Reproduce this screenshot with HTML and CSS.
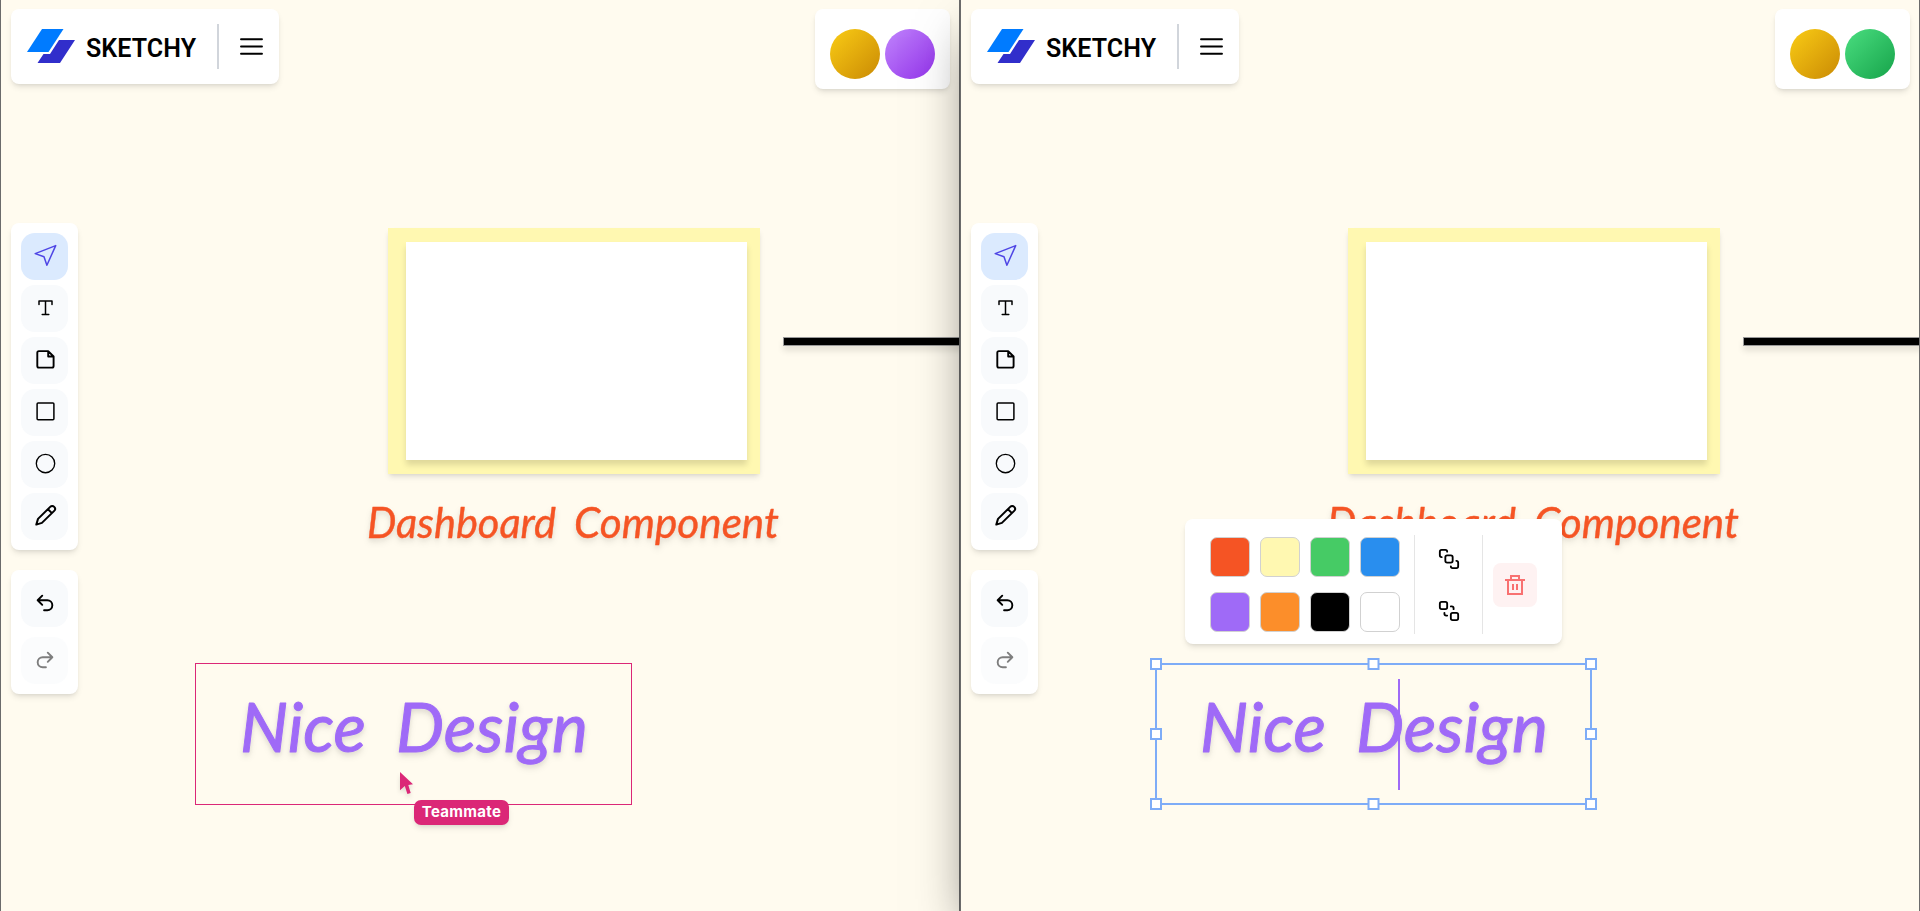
FILE: index.html
```html
<!DOCTYPE html>
<html lang="en">
<head>
<meta charset="utf-8">
<title>Sketchy</title>
<link rel="stylesheet" href="styles.css">
</head>
<body>
<svg class="defs" aria-hidden="true">
  <symbol id="logo" viewBox="0 0 48 34">
    <path fill="#007bff" d="M15 0H36.5L21.5 23H0z"/>
    <path fill="#312ecb" d="M32 11H48L33 34H10.5L16.5 25H23z"/>
  </symbol>
  <symbol id="menu" viewBox="0 0 24 24"><path d="M2 4.3h21M2 11.5h21M2 18.7h21" stroke-width="1.9"/></symbol>
  <symbol id="select" viewBox="0 0 24 24"><path d="M2.2 9.6 22.7 1.6 13.9 21.2 11 12.7z" stroke-width="1.5"/></symbol>
  <symbol id="text" viewBox="0 0 24 24"><path d="M6 8.6V5.1H19V8.6M12.5 5.1V18.5M9.2 18.4H15.8" stroke-width="1.5"/></symbol>
  <symbol id="note" viewBox="0 0 24 24"><path d="M15.2 3.1H5.9A1.6 1.6 0 0 0 4.3 4.7V18A1.6 1.6 0 0 0 5.9 19.6H19A1.6 1.6 0 0 0 20.6 18V8.5zV8.5H20.6" stroke-width="1.9"/></symbol>
  <symbol id="square" viewBox="0 0 24 24"><rect x="4.1" y="3" width="16.8" height="16.8" rx="1" stroke-width="1.5"/></symbol>
  <symbol id="circle" viewBox="0 0 24 24"><circle cx="12.5" cy="11.5" r="9.2" stroke-width="1.35"/></symbol>
  <symbol id="pencil" viewBox="0 0 24 24"><path d="M3.3 20.6 5 14.9 17.2 2.9a2.7 2.7 0 0 1 4 4L8.9 18.9zM15 5.2l3.9 3.9" stroke-width="2"/></symbol>
  <symbol id="undo" viewBox="0 0 24 24"><path d="M9 14 4 9l5-5M4 9h10.5a5.5 5.5 0 0 1 0 11H11" stroke-width="2.1"/></symbol>
  <symbol id="redo" viewBox="0 0 24 24"><path d="m15 14 5-5-5-5M20 9H9.5a5.5 5.5 0 0 0 0 11H13" stroke-width="2.1"/></symbol>
  <symbol id="front" viewBox="0 0 24 24"><g stroke-width="2"><rect x="8" y="8" width="8" height="8" rx="2"/><path d="M4 10a2 2 0 0 1-2-2V4a2 2 0 0 1 2-2h4a2 2 0 0 1 2 2M14 20a2 2 0 0 0 2 2h4a2 2 0 0 0 2-2v-4a2 2 0 0 0-2-2"/></g></symbol>
  <symbol id="back" viewBox="0 0 24 24"><g stroke-width="2"><rect x="14" y="14" width="8" height="8" rx="2"/><rect x="2" y="2" width="8" height="8" rx="2"/><path d="M7 14v1a2 2 0 0 0 2 2h1M14 7h1a2 2 0 0 1 2 2v1"/></g></symbol>
  <symbol id="trash" viewBox="0 0 20 20"><path d="M0 5H20M6 5V1H14V5M3 5V19H17V5M8 9V15M12 9V15" stroke-width="2" stroke-linecap="butt" stroke-linejoin="miter"/></symbol>
</svg>

<main class="split">
  <section class="pane">
    <div class="sheet yellow"></div>
    <div class="sheet white"></div>
    <div class="line"></div>
    <svg class="label caption" width="440" height="70"><text y="44.5"><tspan x="6" textLength="189" lengthAdjust="spacingAndGlyphs">Dashboard</tspan> <tspan x="213" textLength="205" lengthAdjust="spacingAndGlyphs">Component</tspan></text></svg>
    <svg class="label title" width="437" height="142"><text y="89"><tspan x="45" textLength="126" lengthAdjust="spacingAndGlyphs">Nice</tspan> <tspan x="201" textLength="192" lengthAdjust="spacingAndGlyphs">Design</tspan></text></svg>
    <div class="remote-box"></div>
    <svg class="pointer" width="14" height="23" viewBox="0 0 14 23"><path d="M0 0 13 12.2 8.3 13 10.7 21 7.4 22 4.8 14 0 18.2z"/></svg>
    <span class="teammate">Teammate</span>

    <div class="topbar">
      <header class="card brand"><svg class="logo"><use href="#logo"/></svg><span class="name">SKETCHY</span><i class="rule"></i><svg class="icon"><use href="#menu"/></svg></header>
      <div class="card people"><i class="avatar gold"></i><i class="avatar violet"></i></div>
    </div>
    <nav class="rail">
      <div class="card tools">
        <button class="tool active"><svg class="icon"><use href="#select"/></svg></button>
        <button class="tool"><svg class="icon"><use href="#text"/></svg></button>
        <button class="tool"><svg class="icon"><use href="#note"/></svg></button>
        <button class="tool"><svg class="icon"><use href="#square"/></svg></button>
        <button class="tool"><svg class="icon"><use href="#circle"/></svg></button>
        <button class="tool"><svg class="icon"><use href="#pencil"/></svg></button>
      </div>
      <div class="card tools history">
        <button class="tool"><svg class="icon small"><use href="#undo"/></svg></button>
        <button class="tool off"><svg class="icon small"><use href="#redo"/></svg></button>
      </div>
    </nav>
  </section>

  <section class="pane">
    <div class="sheet yellow"></div>
    <div class="sheet white"></div>
    <div class="line"></div>
    <svg class="label caption" width="440" height="70"><text y="44.5"><tspan x="6" textLength="189" lengthAdjust="spacingAndGlyphs">Dashboard</tspan> <tspan x="213" textLength="205" lengthAdjust="spacingAndGlyphs">Component</tspan></text></svg>
    <svg class="label title" width="437" height="142"><text y="89"><tspan x="45" textLength="126" lengthAdjust="spacingAndGlyphs">Nice</tspan> <tspan x="201" textLength="192" lengthAdjust="spacingAndGlyphs">Design</tspan></text></svg>
    <div class="caret"></div>
    <svg class="selection" width="448" height="152">
      <rect class="outline" x="7" y="6" width="435" height="140"/>
      <g class="handles">
        <rect x="2" y="1" width="10" height="10"/><rect x="219.5" y="1" width="10" height="10"/><rect x="437" y="1" width="10" height="10"/>
        <rect x="2" y="71" width="10" height="10"/><rect x="437" y="71" width="10" height="10"/>
        <rect x="2" y="141" width="10" height="10"/><rect x="219.5" y="141" width="10" height="10"/><rect x="437" y="141" width="10" height="10"/>
      </g>
    </svg>

    <div class="card palette">
      <div class="swatches">
        <i class="swatch red"></i><i class="swatch lemon"></i><i class="swatch green"></i><i class="swatch blue"></i>
        <i class="swatch purple"></i><i class="swatch orange"></i><i class="swatch black"></i><i class="swatch blank"></i>
      </div>
      <div class="order"><svg class="icon small"><use href="#front"/></svg><svg class="icon small"><use href="#back"/></svg></div>
      <button class="remove"><svg class="trash"><use href="#trash"/></svg></button>
    </div>

    <div class="topbar">
      <header class="card brand"><svg class="logo"><use href="#logo"/></svg><span class="name">SKETCHY</span><i class="rule"></i><svg class="icon"><use href="#menu"/></svg></header>
      <div class="card people"><i class="avatar gold"></i><i class="avatar mint"></i></div>
    </div>
    <nav class="rail">
      <div class="card tools">
        <button class="tool active"><svg class="icon"><use href="#select"/></svg></button>
        <button class="tool"><svg class="icon"><use href="#text"/></svg></button>
        <button class="tool"><svg class="icon"><use href="#note"/></svg></button>
        <button class="tool"><svg class="icon"><use href="#square"/></svg></button>
        <button class="tool"><svg class="icon"><use href="#circle"/></svg></button>
        <button class="tool"><svg class="icon"><use href="#pencil"/></svg></button>
      </div>
      <div class="card tools history">
        <button class="tool"><svg class="icon small"><use href="#undo"/></svg></button>
        <button class="tool off"><svg class="icon small"><use href="#redo"/></svg></button>
      </div>
    </nav>
  </section>
</main>
</body>
</html>
```
FILE: styles.css
```css
* { box-sizing: border-box; }
body { margin: 0; overflow: hidden; font-family: Inter, "Liberation Sans", sans-serif; }
.defs { display: none; }

.split { display: flex; width: 1920px; height: 911px; overflow: hidden; }
.pane {
  position: relative;
  width: 960px;
  height: 911px;
  padding: 9px 9px 0 10px;
  overflow: hidden;
  background: #fffbef;
  border: solid #6b6b6b;
  border-width: 0 1px;
  box-shadow: 0 25px 50px -12px rgb(0 0 0 / .55);
}

.card {
  background: #fff;
  border-radius: 8px;
  box-shadow: 0 4px 6px -1px rgb(0 0 0 / .1), 0 2px 4px -2px rgb(0 0 0 / .1);
}

/* top bar */
.topbar { display: flex; justify-content: space-between; align-items: flex-start; height: 213.5px; }
.brand { display: flex; align-items: center; width: 268px; height: 75px; padding-left: 16px; }
.logo { width: 48px; height: 34px; margin-top: -1px; }
.name { margin: 4px 0 0 11px; width: 119px; font-family: Roboto, "Liberation Sans", sans-serif; font-size: 25px; font-weight: 600; letter-spacing: .1px; line-height: 30px; color: #000; }
.rule { width: 2px; height: 45px; margin: 0 20px 0 12px; background: #d1d5db; }
.icon { width: 24px; height: 24px; fill: none; stroke: #000; stroke-linecap: round; stroke-linejoin: round; }
.icon.small { width: 22px; height: 22px; }
.people { display: flex; gap: 5px; width: 135px; height: 80px; padding: 20px 15px 10px; }
.avatar { width: 50px; height: 50px; border-radius: 50%; }
.gold { background: linear-gradient(to bottom right, #facc15, #ca8a04); }
.violet { background: linear-gradient(to bottom right, #c084fc, #9333ea); }
.mint { background: linear-gradient(to bottom right, #4ade80, #16a34a); }

/* tool rail */
.rail { display: flex; flex-direction: column; gap: 20px; width: 67px; }
.tools { display: flex; flex-direction: column; gap: 5px; padding: 10px; }
.history { gap: 10px; }
.tool {
  display: flex;
  align-items: center;
  justify-content: center;
  width: 47px;
  height: 47px;
  padding: 0 0 1px;
  border: 0;
  border-radius: 14px;
  background: #f8fafc;
}
.active { background: #dbeafe; }
.active .icon { stroke: #4f46e5; }
.off { opacity: .5; }

/* canvas items */
.sheet { position: absolute; box-shadow: 0 4px 6px -1px rgb(0 0 0 / .1), 0 2px 4px -2px rgb(0 0 0 / .1); }
.yellow { left: 387px; top: 228px; width: 372px; height: 246px; background: #fff8b1; }
.white { left: 405px; top: 242px; width: 341px; height: 218px; background: #fff; box-shadow: 0 5px 6px rgb(0 0 0 / .13); }
.line { position: absolute; left: 782px; top: 337px; width: 220px; height: 9px; background: #000; border: 1px solid #999; box-shadow: 0 5px 6px rgb(0 0 0 / .1); }
.label { position: absolute; overflow: visible; font-family: Lato, sans-serif; font-style: italic; stroke-linejoin: round; filter: drop-shadow(0 4px 3px rgb(0 0 0 / .09)) drop-shadow(0 2px 2px rgb(0 0 0 / .06)); }
.caption { left: 360px; top: 493px; font-size: 43px; fill: #f55424; stroke: #f55424; stroke-width: .4px; }
.title { left: 194px; top: 663px; font-size: 68px; fill: #9f6af7; stroke: #9f6af7; stroke-width: 1px; }
.remote-box { position: absolute; left: 194px; top: 663px; width: 437px; height: 142px; border: 1px solid #db2777; }
.pointer { position: absolute; left: 399px; top: 772px; fill: #db2777; overflow: visible; filter: drop-shadow(0 3px 2px rgb(0 0 0 / .12)); }
.teammate {
  position: absolute;
  left: 413px;
  top: 800px;
  width: 95px;
  height: 25px;
  border-radius: 7px;
  background: #db2777;
  color: #fff;
  font-size: 15px;
  font-weight: 700;
  letter-spacing: .3px;
  line-height: 24px;
  text-align: center;
  box-shadow: 0 4px 6px -1px rgb(0 0 0 / .1), 0 2px 4px -2px rgb(0 0 0 / .1);
}
.caret { position: absolute; left: 437px; top: 679px; width: 2px; height: 111px; background: #9f6af7; }
.selection { position: absolute; left: 188px; top: 658px; }
.selection rect { fill: none; stroke: #7eacf7; stroke-width: 2; }
.selection .handles rect { fill: #fff; }

/* colour palette popover */
.palette { position: absolute; left: 224px; top: 519px; display: flex; align-items: flex-start; width: 377px; height: 125px; padding: 16px 25px 10px; }
.swatches { display: grid; grid-template-columns: repeat(4, 40px); gap: 15px 10px; padding: 2px 14px 0 0; }
.swatch { height: 40px; border: 1px solid #d1d1d1; border-radius: 7px; }
.red { background: #f55424; }
.lemon { background: #fff8b1; }
.green { background: #46cb65; }
.blue { background: #298eee; }
.purple { background: #9f6af7; }
.orange { background: #fc8e2a; }
.black { background: #000; }
.blank { background: #fff; }
.order { display: flex; flex-direction: column; align-items: center; gap: 30px; width: 69px; height: 99px; padding-top: 13px; border: solid #e5e5e5; border-width: 0 1px; }
.remove { display: flex; align-items: center; justify-content: center; flex: none; width: 44px; height: 44px; margin: 28px 0 0 10px; padding: 0; border: 0; border-radius: 8px; background: #fef2f2; }
.trash { width: 20px; height: 20px; fill: none; stroke: #f87171; }
```
